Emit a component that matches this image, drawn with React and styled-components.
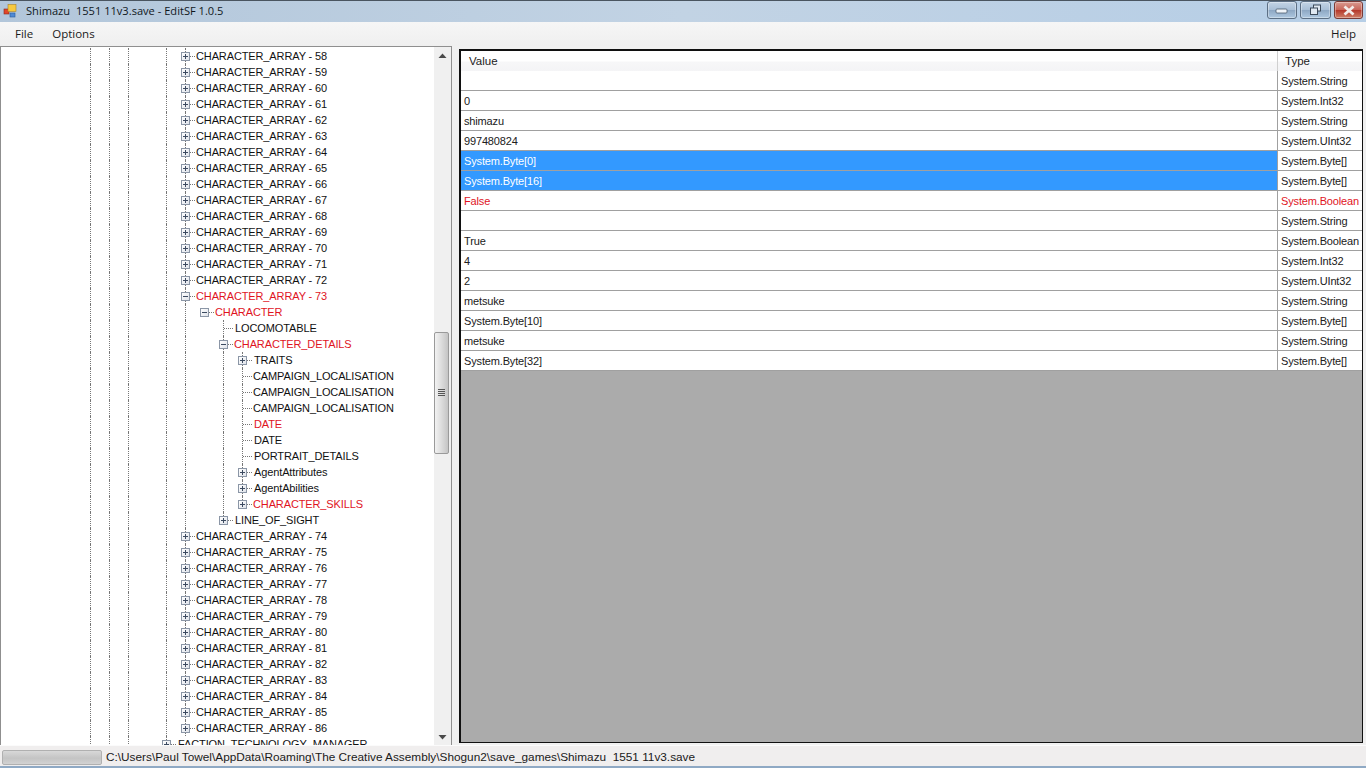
import React from "react";
import styled, { createGlobalStyle } from "styled-components";

const Global = createGlobalStyle`
  html, body { margin: 0; padding: 0; height: 100%; overflow: hidden; }
  body { font-family: "Liberation Sans", Arial, sans-serif; }
`;

const Window = styled.div`
  width: 1366px; height: 768px; display: flex; flex-direction: column;
  background: #f0f0f0; overflow: hidden;
`;
const TitleBar = styled.header`
  height: 22px; flex: none; box-sizing: border-box; display: flex; align-items: flex-start;
  border-top: 1px solid #4a5560; padding-left: 3px;
  background: linear-gradient(90deg, #b2c6da 0%, #c2d3e4 50%, #b6cee6 100%);
`;
const TitleIcon = styled.svg` width: 16px; height: 16px; margin: 2px 7px 0 0; flex: none; `;
const TitleText = styled.span`
  font: 11.1px/19px "Open Sans", sans-serif; color: #10171c; white-space: pre; flex: 1;
`;
const Controls = styled.div` display: flex; gap: 3px; margin: 0 3px 0 0; `;
const CtlButton = styled.div`
  width: ${p => p.$w}px; height: 18px; box-sizing: border-box; border-radius: 3px;
  display: flex; align-items: center; justify-content: center;
  border: 1px solid ${p => (p.$close ? "#7a3a36" : "#5c6f84")};
  box-shadow: inset 0 0 0 1px rgba(255,255,255,.35);
  background: ${p => p.$close
    ? "linear-gradient(180deg,#d99a90 0%,#c8665a 48%,#b5382b 52%,#cf7f68 100%)"
    : "linear-gradient(180deg,#c3d4e5 0%,#a9bfd6 48%,#8ea8c4 52%,#aec8e0 100%)"};
`;
const MenuBar = styled.nav`
  height: 24px; flex: none; box-sizing: border-box; display: flex; align-items: center;
  padding: 0 10px 2px 15px;
  background: linear-gradient(180deg, #f6f6f6, #efefef);
  font: 11.5px "Open Sans", sans-serif; color: #1a1a1a;
`;
const MenuItem = styled.span`
  margin-right: ${p => p.$gap}px;
  margin-left: ${p => (p.$end ? "auto" : "0")};
`;
const Body = styled.main` height: 699px; flex: none; display: flex; `;
const TreePanel = styled.section`
  width: 452px; height: 699px; box-sizing: border-box; flex: none; display: flex;
  border: 1px solid #8f8f8f; border-bottom: none; background: #fff; overflow: hidden;
`;
const TreeList = styled.div` flex: 1; padding-top: 1px; overflow: hidden; height: 698px; `;
const Row = styled.div`
  display: flex; height: 16px; padding-left: 80px; font-size: 11px; line-height: 16px;
  letter-spacing: -0.12px;
  color: ${p => (p.$red ? "#e0141e" : "#111")}; white-space: nowrap;
`;
const Guide = styled.span`
  width: 19px; height: 16px; flex: none; position: relative;
  &::before {
    content: ""; display: ${p => (p.$on ? "block" : "none")};
    position: absolute; left: 9px; top: 0; bottom: ${p => (p.$half ? "8px" : "0")};
    border-left: 1px dotted #777;
  }
  &::after {
    content: ""; display: ${p => (p.$stub ? "block" : "none")};
    position: absolute; left: 10px; top: 8px; width: 9px;
    border-top: 1px dotted #777;
  }
`;
const Expander = styled.span`
  position: absolute; left: 5px; top: 4px; width: 9px; height: 9px; box-sizing: border-box; z-index: 1;
  border: 1px solid #8b96a6; background: linear-gradient(135deg,#fff,#dfe3ea);
  display: flex; align-items: center; justify-content: center;
`;
const ExpanderMark = styled.svg` width: 7px; height: 7px; display: block; `;
const Label = styled.span` margin-left: ${p => p.$indent}px; `;
const Scrollbar = styled.div`
  width: 17px; flex: none; display: flex; flex-direction: column; align-items: flex-start;
  background: #f0f0f0;
`;
const ScrollBtn = styled.div`
  width: 16px; height: ${p => p.$h}px; flex: none; display: flex; align-items: center; justify-content: center;
`;
const ScrollGap = styled.div` height: ${p => p.$h}px; flex: none; `;
const Thumb = styled.div`
  width: 15px; height: 122px; flex: none; box-sizing: border-box; border: 1px solid #9a9a9a; border-radius: 2px;
  background: linear-gradient(90deg,#f2f2f2,#dcdcdc 50%,#c4c4c4);
  display: flex; align-items: center; justify-content: center;
`;
const GridPanel = styled.section`
  width: 904px; height: 694px; box-sizing: border-box; margin: 3px 0 0 7px; flex: none;
  border: 2px solid #101010; border-right-width: 1px; border-bottom-width: 1px;
  background: #ababab; overflow: hidden;
`;
const GridRow = styled.div`
  display: grid; grid-template-columns: 817px 1fr; height: 20px; box-sizing: border-box;
  font-size: 11px; line-height: 21px; letter-spacing: -0.15px;
`;
const HeaderCell = styled.div`
  box-sizing: border-box; padding-left: ${p => p.$pad}px; font-size: 11.5px; line-height: 20px;
  color: #222; letter-spacing: 0;
  border-right: ${p => (p.$last ? "none" : "1px solid #d0d0d0")};
  background: linear-gradient(180deg,#fff 0%,#fff 50%,#f7f7f8 55%,#f4f4f6 100%);
  border-bottom: 1px solid #a8a8a8;
`;
const Cell = styled.div`
  box-sizing: border-box; padding-left: 3px; background: ${p => (p.$sel ? "#3399ff" : "#fff")};
  color: ${p => (p.$sel ? "#fff" : p.$red ? "#e0141e" : "#202020")};
  border-bottom: 1px solid #a0a0a0; border-right: ${p => (p.$last ? "none" : "1px solid #a0a0a0")};
  white-space: nowrap; overflow: hidden;
`;
const StatusBar = styled.footer`
  height: 23px; flex: none; box-sizing: border-box; display: flex; align-items: flex-start;
  padding: 4px 0 0 2px; background: #f0eeee; border-top: 1px solid #fbfbfb;
  border-bottom: 2px solid #8fa9c4;
`;
const Progress = styled.div`
  width: 100px; height: 15px; flex: none; box-sizing: border-box; border: 1px solid #b0b0b0; border-radius: 2px;
  background: linear-gradient(180deg,#d8d8d8,#c4c4c4 55%,#d2d2d2);
`;
const StatusText = styled.span`
  margin-left: 4px; font-size: 11.8px; line-height: 15px; color: #1a1a1a; white-space: pre;
`;

const N = (n, extra = {}) => ({ d: 0, t: `CHARACTER_ARRAY - ${n}`, e: "+", ...extra });
const range = (a, b) => Array.from({ length: b - a + 1 }, (_, i) => N(a + i));
const nodes = [
  ...range(58, 72),
  { ...N(73), e: "-", red: true },
  { d: 1, t: "CHARACTER", e: "-", red: true },
  { d: 2, t: "LOCOMOTABLE", x: 2 },
  { d: 2, t: "CHARACTER_DETAILS", e: "-", red: true },
  { d: 3, t: "TRAITS", e: "+", x: 2 },
  { d: 3, t: "CAMPAIGN_LOCALISATION" },
  { d: 3, t: "CAMPAIGN_LOCALISATION" },
  { d: 3, t: "CAMPAIGN_LOCALISATION" },
  { d: 3, t: "DATE", red: true, x: 2 },
  { d: 3, t: "DATE", x: 2 },
  { d: 3, t: "PORTRAIT_DETAILS", x: 2 },
  { d: 3, t: "AgentAttributes", e: "+", x: 2 },
  { d: 3, t: "AgentAbilities", e: "+", x: 2 },
  { d: 3, t: "CHARACTER_SKILLS", e: "+", red: true, last3: true },
  { d: 2, t: "LINE_OF_SIGHT", e: "+", last2: true, x: 2 },
  ...range(74, 86),
  { d: -1, t: "FACTION_TECHNOLOGY_MANAGER", e: "+", x: 2 },
];

const grid = [
  ["", "System.String"], ["0", "System.Int32"], ["shimazu", "System.String"],
  ["997480824", "System.UInt32"], ["System.Byte[0]", "System.Byte[]", "sel"],
  ["System.Byte[16]", "System.Byte[]", "sel"], ["False", "System.Boolean", "red"],
  ["", "System.String"], ["True", "System.Boolean"], ["4", "System.Int32"],
  ["2", "System.UInt32"], ["metsuke", "System.String"], ["System.Byte[10]", "System.Byte[]"],
  ["metsuke", "System.String"], ["System.Byte[32]", "System.Byte[]"],
];

const Node = ({ n }) => {
  const col = n.d + 5;
  const cells = [];
  for (let c = 0; c < col; c++) {
    let on = c === 0 || c === 1 || c === 2 || c === 4;
    if (c === 5) on = true;
    if (c === 7 && n.d >= 3) on = true;
    cells.push(<Guide key={c} $on={on} />);
  }
  const own = n.d !== 1;
  const half = n.last2 || n.last3;
  return (
    <Row $red={n.red}>
      {cells}
      <Guide $on={own} $half={half} $stub>
        {n.e && (
          <Expander>
            <ExpanderMark viewBox="0 0 7 7">
              <path d={n.e === "+" ? "M1 3.5H6M3.5 1V6" : "M1 3.5H6"} stroke="#3c4a60" strokeWidth="1" fill="none" />
            </ExpanderMark>
          </Expander>
        )}
      </Guide>
      <Label $indent={n.x || 1}>{n.t}</Label>
    </Row>
  );
};

export default function App() {
  return (
    <Window>
      <Global />
      <TitleBar>
        <TitleIcon viewBox="0 0 16 16">
          <rect x="1" y="6" width="5" height="5" fill="#e2452a" stroke="#8a2a18" strokeWidth=".6" />
          <rect x="5" y="1.5" width="8" height="7" fill="#f7c93e" stroke="#a8822a" strokeWidth=".6" />
          <rect x="7" y="10" width="5" height="4" fill="#4f8ad6" stroke="#2a5a9a" strokeWidth=".6" />
        </TitleIcon>
        <TitleText>Shimazu  1551 11v3.save - EditSF 1.0.5</TitleText>
        <Controls>
          <CtlButton $w={30}>
            <svg width="14" height="7" viewBox="0 0 14 7"><rect x="1" y="2" width="11" height="4" rx="1" fill="#eef3f8" stroke="#4a5a6c" strokeWidth=".8" /></svg>
          </CtlButton>
          <CtlButton $w={31}>
            <svg width="13" height="12" viewBox="0 0 13 12"><rect x="4.5" y="1" width="7" height="6" fill="#dfe8f1" stroke="#3c4a5a" /><rect x="1.5" y="4" width="7" height="6.5" fill="#dfe8f1" stroke="#3c4a5a" /></svg>
          </CtlButton>
          <CtlButton $w={29} $close>
            <svg width="14" height="11" viewBox="0 0 14 11"><path d="M2.5 1.5L11.5 9.5M11.5 1.5L2.5 9.5" stroke="#f3ecea" strokeWidth="2.8" /></svg>
          </CtlButton>
        </Controls>
      </TitleBar>
      <MenuBar>
        <MenuItem $gap={19}>File</MenuItem>
        <MenuItem $gap={0}>Options</MenuItem>
        <MenuItem $gap={0} $end>Help</MenuItem>
      </MenuBar>
      <Body>
        <TreePanel>
          <TreeList>
            {nodes.map((n, i) => <Node key={i} n={n} />)}
          </TreeList>
          <Scrollbar>
            <ScrollBtn $h={17}>
              <svg width="9" height="6" viewBox="0 0 9 6"><path d="M4.5 0.5L8.5 5H.5Z" fill="#4a4a4a" /></svg>
            </ScrollBtn>
            <ScrollGap $h={268} />
            <Thumb>
              <svg width="7" height="8" viewBox="0 0 7 8"><path d="M0 .5H7M0 2.5H7M0 4.5H7M0 6.5H7" stroke="#555" /></svg>
            </Thumb>
            <ScrollGap $h={274} />
            <ScrollBtn $h={17}>
              <svg width="9" height="6" viewBox="0 0 9 6"><path d="M4.5 5.5L8.5 1H.5Z" fill="#4a4a4a" /></svg>
            </ScrollBtn>
          </Scrollbar>
        </TreePanel>
        <GridPanel>
          <GridRow>
            <HeaderCell $pad={8}>Value</HeaderCell>
            <HeaderCell $pad={7} $last>Type</HeaderCell>
          </GridRow>
          {grid.map(([v, t, k], i) => (
            <GridRow key={i}>
              <Cell $sel={k === "sel"} $red={k === "red"}>{v}</Cell>
              <Cell $red={k === "red"} $last>{t}</Cell>
            </GridRow>
          ))}
        </GridPanel>
      </Body>
      <StatusBar>
        <Progress />
        <StatusText>C:\Users\Paul Towel\AppData\Roaming\The Creative Assembly\Shogun2\save_games\Shimazu  1551 11v3.save</StatusText>
      </StatusBar>
    </Window>
  );
}
